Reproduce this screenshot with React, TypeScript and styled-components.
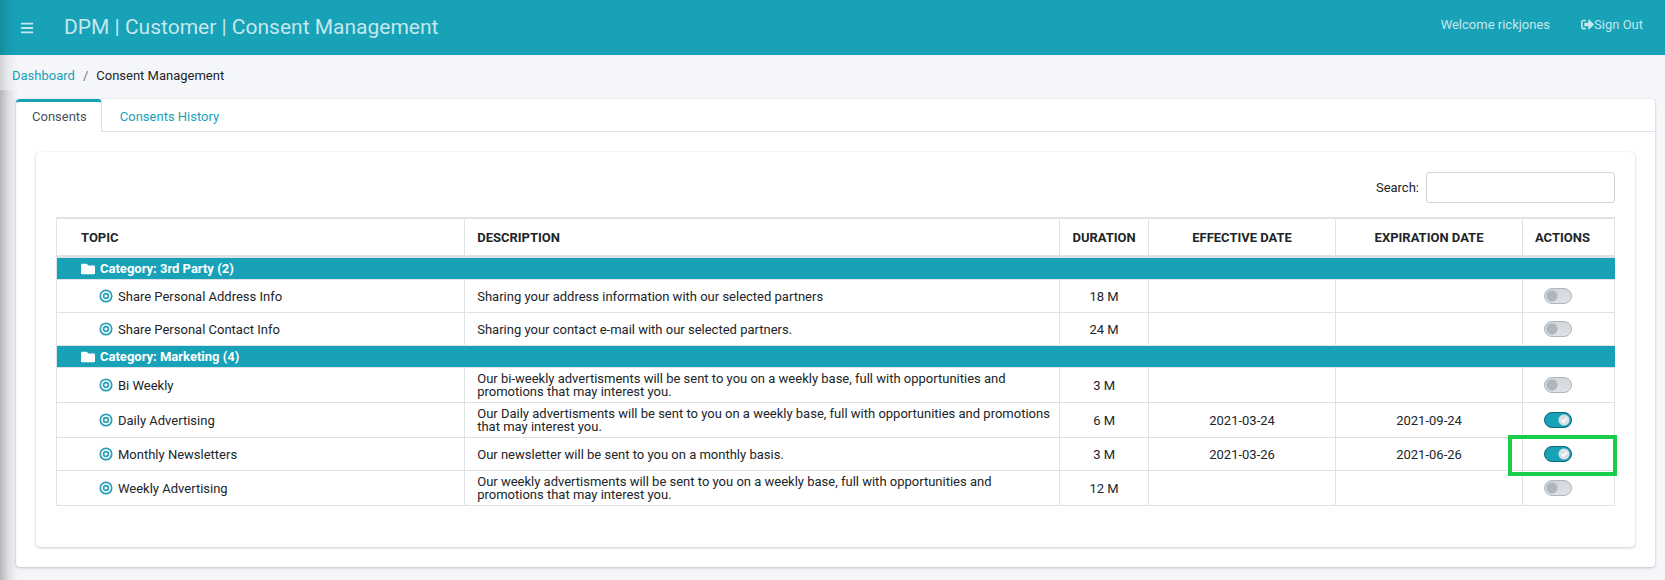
import React, { useState } from "react";
import styled, { createGlobalStyle } from "styled-components";
import { FaBars, FaFolder, FaSignOutAlt } from "react-icons/fa";

const teal = "#17a2b8";
const line = "#dee2e6";

const GlobalStyle = createGlobalStyle`
  *, *::before, *::after { box-sizing: border-box; }
  body {
    margin: 0;
    background: #f4f6f9;
    color: #212529;
    font: 13px/20px Roboto, "Liberation Sans", sans-serif;
  }
  #root { overflow: hidden; }
`;

const Page = styled.div`
  position: relative;
  min-height: 100vh;
`;

const DrawerShadow = styled.div<{ $top: number }>`
  position: absolute;
  top: ${(p) => p.$top}px;
  bottom: 0;
  left: 0;
  width: 18px;
  pointer-events: none;
  background: linear-gradient(to right, rgba(0, 0, 0, 0.14), rgba(0, 0, 0, 0.05) 8px, transparent);
`;

const TopBar = styled.header`
  display: flex;
  align-items: center;
  height: 55px;
  padding: 0 22px 0 20px;
  background: ${teal};
  color: rgba(255, 255, 255, 0.75);
`;

const MenuButton = styled.button`
  display: flex;
  padding: 0;
  border: 0;
  background: none;
  color: inherit;
  font-size: 14px;
`;

const Title = styled.h1`
  flex: 1;
  margin: 0 0 0 30px;
  padding-bottom: 2px;
  font-size: 21px;
  line-height: 30px;
  font-weight: 400;
`;

const UserNav = styled.nav`
  display: flex;
  align-items: center;
  gap: 31px;
  padding-bottom: 6px;
`;

const SignOut = styled.a`
  display: flex;
  align-items: center;
  color: inherit;
  text-decoration: none;
`;

const Breadcrumb = styled.nav`
  display: flex;
  gap: 8px;
  padding: 11px 12px 13px;

  a { color: ${teal}; text-decoration: none; }
  i { color: #6c757d; font-style: normal; }
`;

const Card = styled.section`
  border-radius: 4px;
  background: #fff;
  box-shadow: 0 0 1px rgba(0, 0, 0, 0.13), 0 1px 3px rgba(0, 0, 0, 0.2);
`;

const OuterCard = styled(Card)`
  margin: 0 10px 0 16px;
`;

const InnerCard = styled(Card)`
  margin: 20px;
  padding: 20px 20px 41px;
`;

const CardEnd = styled.div`
  display: flow-root;
`;

const Tabs = styled.div`
  display: flex;
  gap: 2px;
  height: 33px;
  border-bottom: 1px solid ${line};
`;

const Tab = styled.button<{ $active?: boolean }>`
  height: 33px;
  padding: 0 14px 1px 16px;
  border: solid ${(p) => (p.$active ? line : "transparent")};
  border-width: 3px 1px 0 0;
  border-top-color: ${(p) => (p.$active ? teal : "transparent")};
  border-radius: 4px 4px 0 0;
  background: ${(p) => (p.$active ? "#fff" : "none")};
  color: ${(p) => (p.$active ? "#495057" : teal)};
  font: inherit;
`;

const SearchRow = styled.div`
  display: flex;
  justify-content: flex-end;
  align-items: center;
  gap: 7px;
  margin-bottom: 14px;
`;

const SearchInput = styled.input`
  width: 189px;
  height: 31px;
  padding: 4px 8px;
  border: 1px solid #ced4da;
  border-radius: 3px;
  font: inherit;
`;

const Table = styled.table`
  width: 100%;
  table-layout: fixed;
  border-collapse: separate;
  border-spacing: 0;
  border: solid ${line};
  border-width: 2px 0 0 1px;
`;

const Column = styled.col<{ $width?: string }>`
  width: ${(p) => p.$width ?? "auto"};
`;

const HeadCell = styled.th<{ $align?: string; $indent?: number }>`
  height: 39px;
  padding: 2px 12px 0 ${(p) => p.$indent ?? 12}px;
  border: solid ${line};
  border-width: 0 1px 3px 0;
  text-align: ${(p) => p.$align ?? "center"};
  font-weight: 700;
  white-space: nowrap;
`;

const Cell = styled.td<{ $center?: boolean }>`
  position: relative;
  height: 33px;
  padding: ${(p) => (p.$center ? "4px 12px" : "4px 4px 4px 12px")};
  border: solid ${line};
  border-width: 0 1px 1px 0;
  line-height: 13px;
  text-align: ${(p) => (p.$center ? "center" : "left")};
`;

const CategoryCell = styled.th`
  height: 22px;
  padding: 0 24px;
  border-bottom: 1px solid ${line};
  background: ${teal};
  background-clip: padding-box;
  color: #fff;
  text-align: left;
  line-height: 21px;
`;

const IconText = styled.span<{ $indent?: number; $gap: number }>`
  display: flex;
  align-items: center;
  gap: ${(p) => p.$gap}px;
  padding-left: ${(p) => p.$indent ?? 0}px;
`;

const Switch = styled.input`
  appearance: none;
  display: block;
  width: 28px;
  height: 16px;
  margin: 0 0 0 9px;
  border: 1px solid #adb5bd;
  border-radius: 8px;
  background:
    radial-gradient(circle at 7px 7px, #adb5bd 5px, transparent 6px),
    linear-gradient(#d3d7db, #dee2e6);

  &:checked {
    border-color: #0f6674;
    background:
      url("data:image/svg+xml,%3Csvg xmlns='http://www.w3.org/2000/svg' viewBox='0 0 12 12'%3E%3Cpath d='M3.5 6l2 2 3.5-4' fill='none' stroke='white' stroke-width='1.6'/%3E%3C/svg%3E") 13px 1px / 12px 12px no-repeat,
      radial-gradient(circle at 19px 7px, #d8dfe5 5px, transparent 6px),
      ${teal};
  }
`;

const Highlight = styled.span`
  position: absolute;
  inset: -3px -3px -6px -15px;
  z-index: 1;
  border: 4px solid #19cc49;
  pointer-events: none;
`;

const TargetIcon = () => (
  <svg width="14" height="14" viewBox="0 0 14 14" fill="none" stroke="#2a9fb5" aria-hidden="true">
    <circle cx="7" cy="7" r="5.7" strokeWidth="1.7" />
    <circle cx="7" cy="7" r="2.4" strokeWidth="1.7" />
  </svg>
);

type Consent = {
  topic: string;
  description: string;
  duration: string;
  from?: string;
  to?: string;
  highlighted?: boolean;
};

const categories: { name: string; consents: Consent[] }[] = [
  {
    name: "3rd Party",
    consents: [
      { topic: "Share Personal Address Info", description: "Sharing your address information with our selected partners", duration: "18 M" },
      { topic: "Share Personal Contact Info", description: "Sharing your contact e-mail with our selected partners.", duration: "24 M" },
    ],
  },
  {
    name: "Marketing",
    consents: [
      { topic: "Bi Weekly", description: "Our bi-weekly advertisments will be sent to you on a weekly base, full with opportunities and promotions that may interest you.", duration: "3 M" },
      { topic: "Daily Advertising", description: "Our Daily advertisments will be sent to you on a weekly base, full with opportunities and promotions that may interest you.", duration: "6 M", from: "2021-03-24", to: "2021-09-24" },
      { topic: "Monthly Newsletters", description: "Our newsletter will be sent to you on a monthly basis.", duration: "3 M", from: "2021-03-26", to: "2021-06-26", highlighted: true },
      { topic: "Weekly Advertising", description: "Our weekly advertisments will be sent to you on a weekly base, full with opportunities and promotions that may interest you.", duration: "12 M" },
    ],
  },
];

const ConsentRow = ({ consent }: { consent: Consent }) => {
  const [on, setOn] = useState(Boolean(consent.from));
  return (
    <tr>
      <Cell>
        <IconText $indent={30} $gap={5}>
          <TargetIcon />
          {consent.topic}
        </IconText>
      </Cell>
      <Cell>{consent.description}</Cell>
      <Cell $center>{consent.duration}</Cell>
      <Cell $center>{consent.from}</Cell>
      <Cell $center>{consent.to}</Cell>
      <Cell>
        <Switch type="checkbox" role="switch" aria-label={consent.topic} checked={on} onChange={() => setOn(!on)} />
        {consent.highlighted && <Highlight />}
      </Cell>
    </tr>
  );
};

export default function App() {
  return (
    <>
      <GlobalStyle />
      <Page>
        <TopBar>
          <MenuButton aria-label="Menu">
            <FaBars />
          </MenuButton>
          <Title>DPM | Customer | Consent Management</Title>
          <UserNav>
            <span>Welcome rickjones</span>
            <SignOut href="#">
              <FaSignOutAlt size={13} />
              Sign Out
            </SignOut>
          </UserNav>
        </TopBar>
        <Breadcrumb aria-label="Breadcrumb">
          <a href="#">Dashboard</a>
          <i>/</i>
          <span>Consent Management</span>
        </Breadcrumb>
        <OuterCard>
          <Tabs role="tablist">
            <Tab role="tab" aria-selected $active>Consents</Tab>
            <Tab role="tab" aria-selected={false}>Consents History</Tab>
          </Tabs>
          <CardEnd>
            <InnerCard>
              <SearchRow>
                <label htmlFor="search">Search:</label>
                <SearchInput id="search" type="search" />
              </SearchRow>
              <Table>
                <colgroup>
                  <Column $width="26.2%" />
                  <Column />
                  <Column $width="89px" />
                  <Column $width="12%" />
                  <Column $width="12%" />
                  <Column $width="92px" />
                </colgroup>
                <thead>
                  <tr>
                    <HeadCell $align="left" $indent={24}>TOPIC</HeadCell>
                    <HeadCell $align="left">DESCRIPTION</HeadCell>
                    <HeadCell>DURATION</HeadCell>
                    <HeadCell>EFFECTIVE DATE</HeadCell>
                    <HeadCell>EXPIRATION DATE</HeadCell>
                    <HeadCell $align="left">ACTIONS</HeadCell>
                  </tr>
                </thead>
                {categories.map((category) => (
                  <tbody key={category.name}>
                    <tr>
                      <CategoryCell colSpan={6} scope="rowgroup">
                        <IconText $gap={5}>
                          <FaFolder size={14} />
                          {`Category: ${category.name} (${category.consents.length})`}
                        </IconText>
                      </CategoryCell>
                    </tr>
                    {category.consents.map((consent) => (
                      <ConsentRow key={consent.topic} consent={consent} />
                    ))}
                  </tbody>
                ))}
              </Table>
            </InnerCard>
          </CardEnd>
        </OuterCard>
        <DrawerShadow $top={0} />
        <DrawerShadow $top={90} />
      </Page>
    </>
  );
}
